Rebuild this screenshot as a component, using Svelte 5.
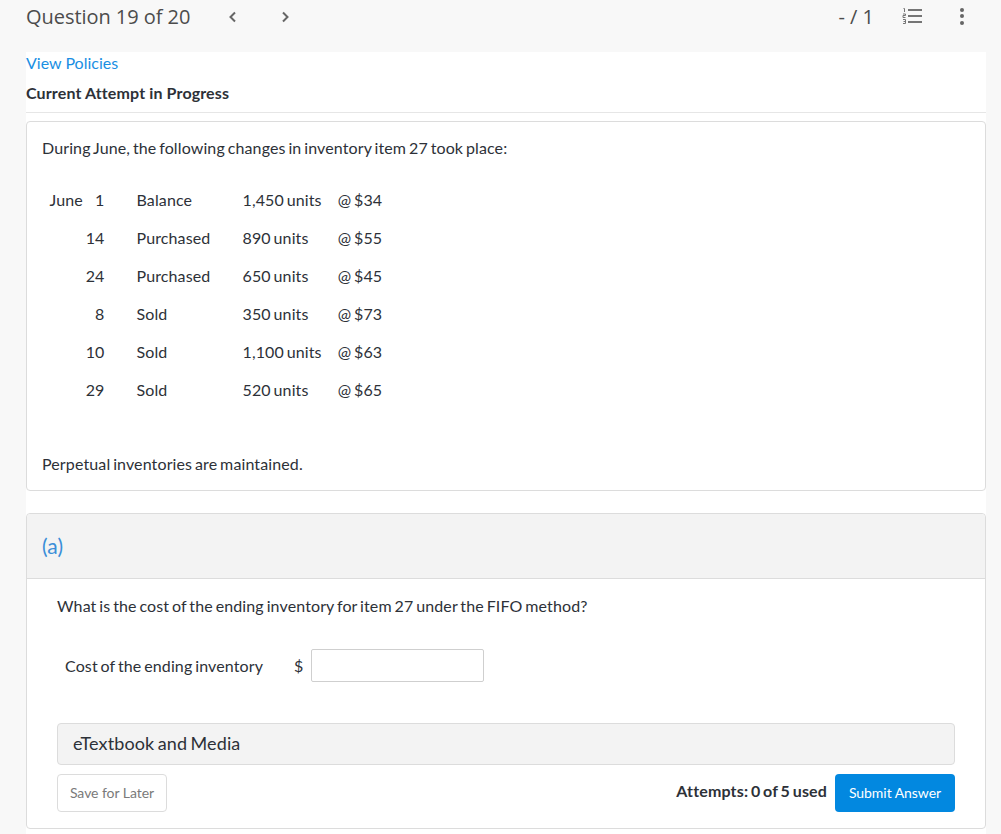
<script lang="ts">
  const rows = [
    { month: "June", day: "1", kind: "Balance", units: "1,450 units", price: "@ $34" },
    { month: "", day: "14", kind: "Purchased", units: "890 units", price: "@ $55" },
    { month: "", day: "24", kind: "Purchased", units: "650 units", price: "@ $45" },
    { month: "", day: "8", kind: "Sold", units: "350 units", price: "@ $73" },
    { month: "", day: "10", kind: "Sold", units: "1,100 units", price: "@ $63" },
    { month: "", day: "29", kind: "Sold", units: "520 units", price: "@ $65" },
  ];
</script>

<div class="page">
  <header class="topbar">
    <div class="nav">
      <h1>Question 19 of 20</h1>
      <button class="arrow" aria-label="Previous">
        <svg width="9" height="12" viewBox="0 0 9 12"><path d="M7 1.500 2.500 6 7 10.500" /></svg>
      </button>
      <button class="arrow" aria-label="Next">
        <svg width="9" height="12" viewBox="0 0 9 12"><path d="M2 1.500 6.500 6 2 10.500" /></svg>
      </button>
    </div>
    <div class="tools">
      <span class="score">- / 1</span>
      <svg class="list-icon" width="20" height="16" viewBox="0 0 20 16" aria-hidden="true">
        <path class="digits" d="M1.500 0.500h1v3.500M1 6h2.500v1.500h-2.500v2h2.500M1 11.500h2.500v4h-2.500M1.500 13.500h2" />
        <rect x="6" y="1" width="14" height="2" />
        <rect x="6" y="7" width="14" height="2" />
        <rect x="6" y="13" width="14" height="2" />
      </svg>
      <span class="dots" aria-hidden="true"><i></i><i></i><i></i></span>
    </div>
  </header>

  <main class="sheet">
    <a class="policies" href="#policies">View Policies</a>
    <div class="attempt">Current Attempt in Progress</div>

    <section class="card problem">
      <p>During June, the following changes in inventory item 27 took place:</p>
      <table>
        <tbody>
          {#each rows as row}
            <tr>
              <td class="date"><span class="month">{row.month}</span><span class="day">{row.day}</span></td>
              <td class="kind">{row.kind}</td>
              <td class="units">{row.units}</td>
              <td>{row.price}</td>
            </tr>
          {/each}
        </tbody>
      </table>
      <p>Perpetual inventories are maintained.</p>
    </section>

    <section class="card part">
      <div class="part-head">(a)</div>
      <div class="part-body">
        <p class="question">What is the cost of the ending inventory for item 27 under the FIFO method?</p>
        <div class="answer">
          <label for="cost">Cost of the ending inventory</label>
          <span class="dollar">$</span>
          <input id="cost" type="text" />
        </div>
        <div class="media">eTextbook and Media</div>
        <div class="actions">
          <button class="save">Save for Later</button>
          <div class="submit-group">
            <span class="used">Attempts: 0 of 5 used</span>
            <button class="submit">Submit Answer</button>
          </div>
        </div>
      </div>
    </section>
  </main>
</div>

<style>
  :global(body) {
    background: #f8f8f8;
    font-family: Lato, "Open Sans", sans-serif;
    color: #2d3138;
  }

  .page {
    height: 834px;
    overflow: hidden;
  }

  .topbar {
    height: 52px;
    box-sizing: border-box;
    padding: 0 37px 20px 26px;
    display: flex;
    align-items: center;
    justify-content: space-between;
  }

  .nav {
    display: flex;
    align-items: center;
  }

  h1 {
    margin: 0 38px 0 0;
    font-family: "Open Sans", sans-serif;
    font-size: 20px;
    font-weight: 400;
    letter-spacing: -0.05px;
    color: #4c4c4c;
  }

  .arrow {
    width: 9px;
    height: 12px;
    padding: 0;
    margin: 2px 44px 0 0;
    border: 0;
    background: none;
    display: flex;
  }

  .arrow path {
    fill: none;
    stroke: #666;
    stroke-width: 2;
  }

  .tools {
    display: flex;
    align-items: center;
  }

  .score {
    font-family: "Open Sans", sans-serif;
    font-size: 20px;
    color: #4c4c4c;
    margin-right: 28px;
  }

  .list-icon {
    margin-right: 38px;
    fill: #757575;
  }

  .digits {
    fill: none;
    stroke: #757575;
    stroke-width: 1;
  }

  .dots {
    display: flex;
    flex-direction: column;
    gap: 2.5px;
  }

  .dots i {
    width: 4px;
    height: 4px;
    border-radius: 50%;
    background: #666;
  }

  .sheet {
    margin: 0 15px 0 26px;
    background: #fff;
    height: 782px;
  }

  .policies {
    display: block;
    font-size: 16px;
    line-height: 22px;
    color: #1a8fe3;
    text-decoration: none;
  }

  .attempt {
    margin-top: 8px;
    height: 30px;
    line-height: 22px;
    font-size: 16px;
    font-weight: 700;
    letter-spacing: 0.13px;
    color: #2d3138;
    border-bottom: 1px solid #e6e6e6;
  }

  .card {
    border: 1px solid #dcdcdc;
    border-radius: 4px;
    background: #fff;
    font-size: 16px;
    letter-spacing: 0.12px;
    word-spacing: -1.37px;
  }

  .problem {
    margin-top: 8px;
    height: 370px;
    box-sizing: border-box;
    padding: 15px;
  }

  .problem p {
    margin: 0;
    line-height: 22px;
  }

  table {
    border-collapse: collapse;
    margin: 21px 0 45px 6.5px;
  }

  td {
    height: 38px;
    padding: 0 16px 0 0;
    white-space: nowrap;
  }

  .date {
    width: 56px;
    padding-right: 32px;
  }

  .month {
    float: left;
    margin-left: 1px;
  }

  .day {
    float: right;
  }

  .kind {
    width: 90px;
  }

  .part {
    margin-top: 22px;
    height: 314px;
  }

  .part-head {
    height: 65px;
    box-sizing: border-box;
    padding: 19px 15px 0;
    background: #f3f3f3;
    border-bottom: 1px solid #dcdcdc;
    border-radius: 4px 4px 0 0;
    font-size: 21px;
    line-height: 26px;
    color: #3a8ed8;
  }

  .part-body {
    padding: 16px 30px 0;
  }

  .question {
    margin: 0;
    line-height: 22px;
  }

  .answer {
    margin: 32px 0 0 8px;
    display: flex;
    align-items: center;
    height: 33px;
  }

  .answer label {
    width: 229px;
  }

  .dollar {
    width: 17px;
  }

  input {
    width: 173px;
    height: 33px;
    box-sizing: border-box;
    border: 1px solid #cfcfcf;
    border-radius: 2px;
    background: #fff;
  }

  .media {
    margin-top: 41px;
    height: 42px;
    box-sizing: border-box;
    padding-left: 15px;
    border: 1px solid #dcdcdc;
    border-radius: 4px;
    background: #f3f3f3;
    font-size: 18px;
    line-height: 38px;
  }

  .actions {
    margin-top: 9px;
    display: flex;
    justify-content: space-between;
    align-items: flex-start;
  }

  .save,
  .submit {
    height: 38px;
    border-radius: 4px;
    font-family: inherit;
    font-size: 14px;
    padding: 0 0 2px;
    word-spacing: 0;
    letter-spacing: -0.05px;
  }

  .save {
    width: 110px;
    background: #fff;
    border: 1px solid #dcdcdc;
    color: #7a7a7a;
  }

  .submit-group {
    display: flex;
    align-items: flex-start;
  }

  .used {
    margin-right: 8px;
    line-height: 34px;
    font-weight: 700;
    letter-spacing: 0.15px;
    word-spacing: -1.3px;
    color: #2d3138;
  }

  .submit {
    width: 120px;
    border: 0;
    background: #0288e0;
    color: #fff;
  }
</style>
